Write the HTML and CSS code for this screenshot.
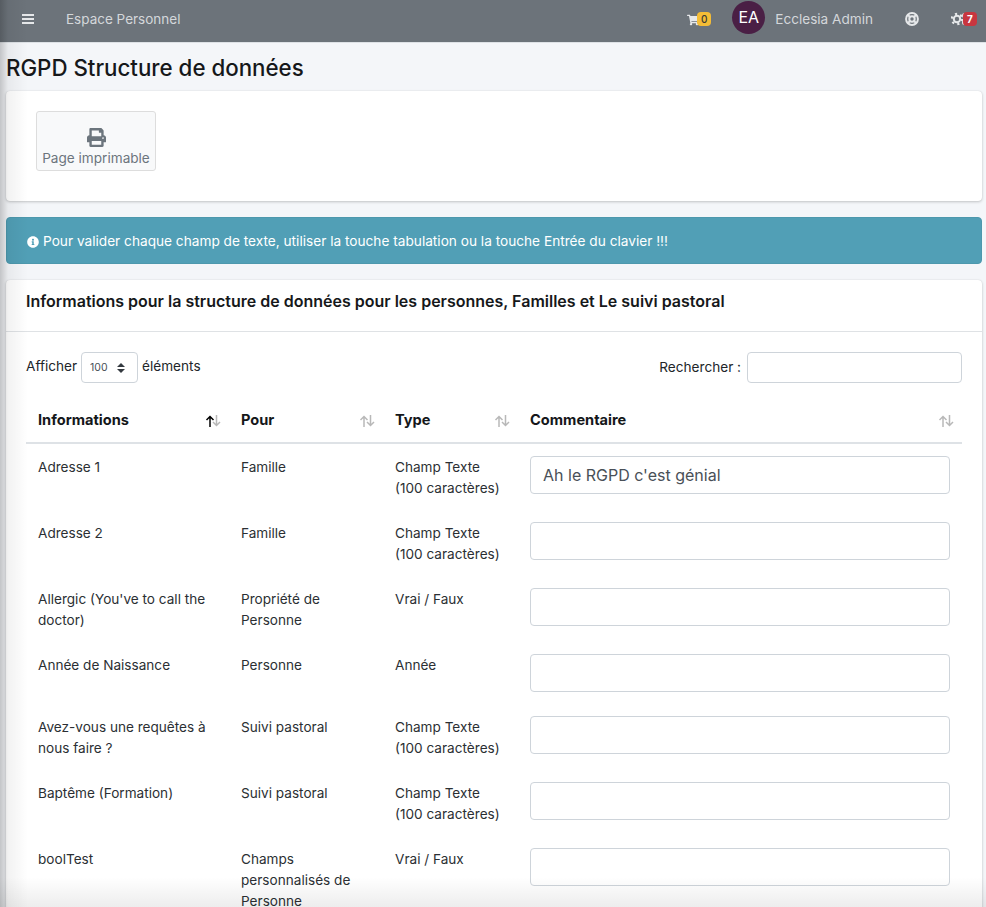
FILE: index.html
```html
<!DOCTYPE html>
<html lang="fr">
<head>
<meta charset="utf-8">
<title>RGPD Structure de données</title>
<link rel="stylesheet" href="styles.css">
</head>
<body>
<div class="page">
  <nav class="navbar">
    <svg class="ic-bars" viewBox="0 0 12 10"><path d="M0 0h12v2H0zM0 4h12v2H0zM0 8h12v2H0z"/></svg>
    <span class="brand">Espace Personnel</span>
    <div class="nav-right">
      <div class="nav-cart">
        <svg class="ic-cart" viewBox="0 0 576 512"><path d="M528 301l47-208c3-15-8-29-23-29H159l-9-45C147 8 137 0 126 0H24C11 0 0 11 0 24v16c0 13 11 24 24 24h70l70 343c-17 10-28 28-28 49 0 31 25 56 56 56s56-25 56-56c0-16-6-30-17-40h210c-11 10-17 24-17 40 0 31 25 56 56 56s56-25 56-56c0-22-13-41-32-50l5-24c3-15-8-29-23-29H218l-7-32h293c11 0 21-8 24-19z"/></svg>
        <span class="badge badge-yellow">0</span>
      </div>
      <div class="avatar">EA</div>
      <span class="user">Ecclesia Admin</span>
      <svg class="ic-help" viewBox="0 0 14 14"><circle cx="7" cy="7" r="5.900"/><circle cx="7" cy="7" r="2.700"/><path d="M2.800 2.800l2.400 2.400M11.200 2.800L8.800 5.200M2.800 11.200l2.400-2.400M11.200 11.200L8.800 8.800"/></svg>
      <div class="nav-cogs">
        <svg class="ic-cog" viewBox="0 0 16 14"><circle class="cog-ring" cx="6" cy="7" r="3.200"/><circle class="cog-teeth" cx="6" cy="7" r="5.200"/><circle class="cog-ring" cx="13.500" cy="3.500" r="1.500"/><circle class="cog-ring" cx="13.500" cy="10.500" r="1.500"/></svg>
        <span class="badge badge-red">7</span>
      </div>
    </div>
  </nav>

  <main class="content">
    <h1 class="title">RGPD Structure de données</h1>

    <section class="card card-tools">
      <a class="tool-btn">
        <svg class="ic-print" viewBox="0 0 512 512"><path d="M448 192V77.250c0-8.490-3.370-16.620-9.370-22.630L393.370 9.370c-6-6-14.140-9.370-22.630-9.370H96C78.330 0 64 14.330 64 32v160c-35.350 0-64 28.650-64 64v112c0 8.840 7.160 16 16 16h48v96c0 17.670 14.330 32 32 32h320c17.670 0 32-14.330 32-32v-96h48c8.840 0 16-7.160 16-16V256c0-35.350-28.650-64-64-64zm-64 256H128v-96h256v96zm0-224H128V64h192v48c0 8.840 7.160 16 16 16h48v96zm48 72c-13.250 0-24-10.750-24-24 0-13.260 10.750-24 24-24s24 10.740 24 24c0 13.250-10.750 24-24 24z"/></svg>
        <span class="tool-label">Page imprimable</span>
      </a>
    </section>

    <div class="alert">
      <svg class="ic-info" viewBox="0 0 512 512"><path d="M256 8C119.043 8 8 119.083 8 256c0 136.997 111.043 248 248 248s248-111.003 248-248C504 119.083 392.957 8 256 8zm0 110c23.196 0 42 18.804 42 42s-18.804 42-42 42-42-18.804-42-42 18.804-42 42-42zm56 254c0 6.627-5.373 12-12 12h-88c-6.627 0-12-5.373-12-12v-24c0-6.627 5.373-12 12-12h12v-64h-12c-6.627 0-12-5.373-12-12v-24c0-6.627 5.373-12 12-12h64c6.627 0 12 5.373 12 12v100h12c6.627 0 12 5.373 12 12v24z"/></svg>
      <span>Pour valider chaque champ de texte, utiliser la touche tabulation ou la touche Entrée du clavier !!!</span>
    </div>

    <section class="card card-table">
      <header class="card-head">Informations pour la structure de données pour les personnes, Familles et Le suivi pastoral</header>
      <div class="card-body">
        <div class="dt-controls">
          <label class="dt-length">Afficher
            <select class="dt-select"><option>100</option></select>
            éléments</label>
          <label class="dt-search">Rechercher :
            <input class="dt-input" type="text">
          </label>
        </div>
        <table class="dt">
          <colgroup>
            <col class="c1"><col class="c2"><col class="c3"><col class="c4">
          </colgroup>
          <thead>
            <tr>
              <th><div class="th-in">Informations<svg class="sort" viewBox="0 0 16 12"><path class="arrow on" d="M5 12V1.500M1.500 5L5 1.500 8.500 5"/><path class="arrow" d="M11.500 0v10.500M8 7l3.500 3.500L15 7"/></svg></div></th>
              <th><div class="th-in">Pour<svg class="sort" viewBox="0 0 16 12"><path class="arrow" d="M5 12V1.500M1.500 5L5 1.500 8.500 5"/><path class="arrow" d="M11.500 0v10.500M8 7l3.500 3.500L15 7"/></svg></div></th>
              <th><div class="th-in">Type<svg class="sort" viewBox="0 0 16 12"><path class="arrow" d="M5 12V1.500M1.500 5L5 1.500 8.500 5"/><path class="arrow" d="M11.500 0v10.500M8 7l3.500 3.500L15 7"/></svg></div></th>
              <th><div class="th-in">Commentaire<svg class="sort" viewBox="0 0 16 12"><path class="arrow" d="M5 12V1.500M1.500 5L5 1.500 8.500 5"/><path class="arrow" d="M11.500 0v10.500M8 7l3.500 3.500L15 7"/></svg></div></th>
            </tr>
          </thead>
          <tbody>
            <tr><td>Adresse 1</td><td>Famille</td><td>Champ Texte (100 caractères)</td><td><input class="cell-input" type="text" value="Ah le RGPD c'est génial"></td></tr>
            <tr><td>Adresse 2</td><td>Famille</td><td>Champ Texte (100 caractères)</td><td><input class="cell-input" type="text"></td></tr>
            <tr><td>Allergic (You've to call the doctor)</td><td>Propriété de Personne</td><td>Vrai / Faux</td><td><input class="cell-input" type="text"></td></tr>
            <tr><td>Année de Naissance</td><td>Personne</td><td>Année</td><td><input class="cell-input" type="text"></td></tr>
            <tr><td>Avez-vous une requêtes à nous faire ?</td><td>Suivi pastoral</td><td>Champ Texte (100 caractères)</td><td><input class="cell-input" type="text"></td></tr>
            <tr><td>Baptême (Formation)</td><td>Suivi pastoral</td><td>Champ Texte (100 caractères)</td><td><input class="cell-input" type="text"></td></tr>
            <tr><td>boolTest</td><td>Champs personnalisés de Personne</td><td>Vrai / Faux</td><td><input class="cell-input" type="text"></td></tr>
          </tbody>
        </table>
      </div>
    </section>
  </main>
  <div class="edge-shade"></div>
</div>
</body>
</html>
```
FILE: styles.css
```css
* { box-sizing: border-box; }
html, body { margin: 0; height: 100%; overflow: hidden; }
body {
  font-family: Inter, "Liberation Sans", sans-serif;
  font-size: 13.600px;
  line-height: 21px;
  color: #212529;
  background: #f4f6f9;
}
.page { position: relative; height: 907px; overflow: hidden; }

.navbar {
  display: flex;
  align-items: center;
  height: 43px;
  padding: 0 0 3px 22px;
  background: #6c737a;
  border-bottom: 1px solid #dee2e6;
  color: #d4d7da;
}
.ic-bars { width: 12px; height: 10px; fill: #e6e8ea; margin-bottom: 1px; }
.brand { margin-left: 32px; font-size: 13.500px; }
.nav-right { margin-left: auto; display: flex; align-items: center; height: 100%; }
.nav-cart, .nav-cogs { display: flex; align-items: center; margin-bottom: 1px; }
.ic-cart { width: 12px; height: 12px; fill: #e6e8ea; margin-top: 2px; }
.badge {
  display: block;
  height: 14px;
  min-width: 14px;
  padding: 0 3px;
  border-radius: 4px;
  font-size: 10px;
  line-height: 14px;
  font-weight: 500;
  text-align: center;
}
.badge-yellow { background: #f5bd36; color: #3a3a33; margin-left: -2px; }
.badge-red { background: #c8363f; color: #fff; margin-left: -4px; font-weight: 700; }
.avatar {
  width: 33px;
  height: 33px;
  margin: 0 0 5px 21px;
  border-radius: 50%;
  background: #4a1f45;
  color: #fff;
  font-size: 16px;
  line-height: 32px;
  text-align: center;
}
.user { margin-left: 10px; font-size: 13.600px; }
.ic-help {
  width: 14px;
  height: 14px;
  margin: 0 0 1px 32px;
  fill: none;
  stroke: #e6e8ea;
  stroke-width: 2;
}
.nav-cogs { margin-left: 32px; margin-right: 9px; }
.ic-cog { width: 16px; height: 14px; fill: none; stroke: #e6e8ea; }
.cog-ring { stroke-width: 2; }
.cog-teeth { stroke-width: 2.200; stroke-dasharray: 2.200 3.250; }

.content { padding: 0 4px 0 6px; }
.title {
  margin: 0;
  padding-top: 9px;
  height: 48px;
  font-size: 22.300px;
  line-height: 32px;
  font-weight: 500;
  color: #16181a;
}
.card {
  background: #fff;
  border-radius: 4px;
  box-shadow: 0 0 1px rgba(0,0,0,.13), 0 1px 3px rgba(0,0,0,.2);
}
.card-tools { height: 110px; padding: 20px 30px; }
.tool-btn {
  display: flex;
  flex-direction: column;
  align-items: center;
  width: 120px;
  height: 60px;
  padding-top: 16px;
  background: #f8f9fa;
  border: 1px solid #ddd;
  border-radius: 3px;
  color: #6c757d;
  font-size: 13.600px;
  line-height: 21px;
}
.ic-print { width: 19px; height: 19px; fill: #6c757d; }
.tool-label { margin-top: 1px; }

.alert {
  display: flex;
  align-items: center;
  height: 47px;
  margin-top: 16px;
  padding: 2px 20px 0;
  background: #519fb6;
  border: 1px solid #4d98ad;
  border-radius: 4px;
  color: #fff;
  font-size: 13.670px;
}
.ic-info { width: 12px; height: 12px; fill: #fff; margin-right: 4px; }

.card-table { margin-top: 16px; height: 700px; }
.card-head {
  height: 52px;
  padding: 10px 20px 0;
  border-bottom: 1px solid #dfe2e5;
  font-size: 16px;
  font-weight: 600;
  line-height: 22px;
  color: #16181a;
}
.card-body { padding: 20px 20px 0; }
.dt-controls { display: flex; justify-content: space-between; align-items: flex-start; height: 49px; }
.dt-length { display: flex; align-items: flex-start; line-height: 28px; }
.dt-select {
  appearance: none;
  width: 57px;
  height: 31px;
  margin: 0 4px;
  padding: 3px 8px;
  border: 1px solid #ced4da;
  border-radius: 4px;
  font-family: inherit;
  font-size: 10.500px;
  color: #495057;
  background: #fff url("data:image/svg+xml,%3csvg xmlns='http://www.w3.org/2000/svg' width='8' height='10' viewBox='0 0 4 5'%3e%3cpath fill='%23343a40' d='M2 0L0 2h4zm0 5L0 3h4z'/%3e%3c/svg%3e") no-repeat right 12px center;
}
.dt-search { display: flex; align-items: flex-start; gap: 6px; line-height: 30px; }
.dt-input {
  width: 215px;
  height: 31px;
  border: 1px solid #ced4da;
  border-radius: 4px;
  background: #fff;
}
.dt { width: 936px; table-layout: fixed; border-collapse: collapse; }
.c1 { width: 203px; }
.c2 { width: 154px; }
.c3 { width: 135px; }
.c4 { width: 444px; }
.dt th {
  height: 42px;
  padding: 0 8px 2px 12px;
  border-bottom: 2px solid #dee2e6;
  text-align: left;
  font-size: 14.600px;
  font-weight: 700;
  color: #15171a;
}
.th-in { display: flex; justify-content: space-between; align-items: center; }
.sort { width: 16px; height: 12px; fill: none; }
.arrow { stroke: #000; stroke-width: 1.500; opacity: .28; }
.arrow.on { opacity: 1; }
.dt td {
  padding: 13px 12px 11px;
  vertical-align: top;
  font-size: 13.600px;
  color: #2b2f33;
}
.cell-input {
  display: block;
  width: 100%;
  height: 38px;
  margin: -1px 0 1px;
  padding: 6px 12px;
  border: 1px solid #ced4da;
  border-radius: 4px;
  font-family: inherit;
  font-size: 16px;
  color: #495057;
  background: #fff;
}
.edge-shade {
  position: absolute;
  inset: 0;
  pointer-events: none;
  background:
    linear-gradient(to right, rgba(0,0,0,.2), rgba(0,0,0,.05) 8px, rgba(0,0,0,0) 28px),
    linear-gradient(to top, rgba(0,0,0,.07), rgba(0,0,0,0) 30px);
}
```
